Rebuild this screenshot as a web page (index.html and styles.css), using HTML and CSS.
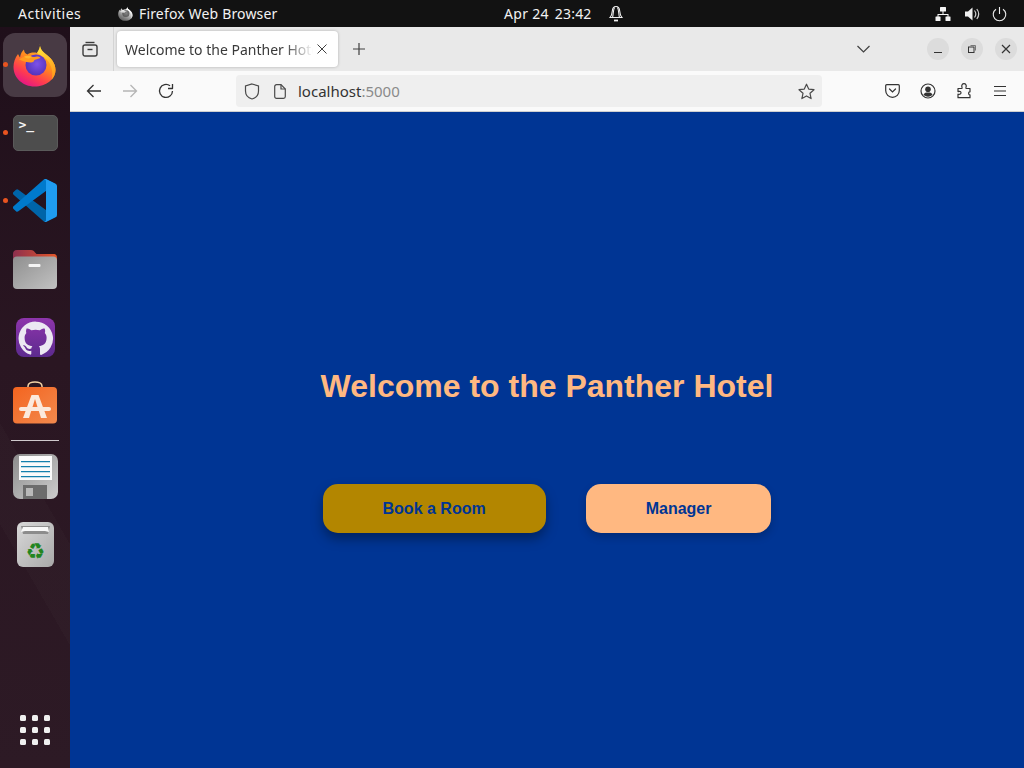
FILE: index.html
```html
<!DOCTYPE html>
<html lang="en">
<head>
<meta charset="utf-8">
<title>Welcome to the Panther Hotel</title>
<link rel="stylesheet" href="styles.css">
</head>
<body>
<svg class="defs" width="0" height="0" aria-hidden="true">
  <defs>
    <linearGradient id="fxBody" x1="0.8" y1="0.1" x2="0.3" y2="1"><stop offset="0" stop-color="#ffb92a"/><stop offset="0.4" stop-color="#ff8a1f"/><stop offset="0.72" stop-color="#ff3d4e"/><stop offset="1" stop-color="#e31587"/></linearGradient>
    <radialGradient id="fxGlobe" cx="0.55" cy="0.45" r="0.7"><stop offset="0" stop-color="#7d52e8"/><stop offset="1" stop-color="#4a2bb0"/></radialGradient>
    <linearGradient id="fxFlame" x1="0.2" y1="0" x2="0.8" y2="1"><stop offset="0" stop-color="#ffe53d"/><stop offset="1" stop-color="#ff9a1a"/></linearGradient>
    <linearGradient id="folderGrey" x1="0" y1="0" x2="1" y2="1"><stop offset="0" stop-color="#8f8f8f"/><stop offset="1" stop-color="#c2c2c2"/></linearGradient>
    <linearGradient id="folderTab" x1="0" y1="0" x2="1" y2="0"><stop offset="0" stop-color="#8d2f4e"/><stop offset="1" stop-color="#e4572a"/></linearGradient>
    <linearGradient id="gitBg" x1="0" y1="0" x2="0" y2="1"><stop offset="0" stop-color="#8e35ac"/><stop offset="1" stop-color="#5c2a8e"/></linearGradient>
    <linearGradient id="shopBg" x1="0" y1="0" x2="1" y2="1"><stop offset="0" stop-color="#f4641f"/><stop offset="1" stop-color="#f28a4e"/></linearGradient>
    <linearGradient id="saveBg" x1="0" y1="0" x2="1" y2="1"><stop offset="0" stop-color="#8c8c8c"/><stop offset="1" stop-color="#cdcdcd"/></linearGradient>
    <linearGradient id="trashBg" x1="0" y1="0" x2="1" y2="1"><stop offset="0" stop-color="#d8d8d8"/><stop offset="1" stop-color="#a9a9a9"/></linearGradient>
    <symbol id="firefox" viewBox="0 0 44 44">
      <path fill="url(#fxBody)" d="M27 .5C26.500 5 29 8 32 10.500 38 15 42.500 20 42.500 27 42.500 36 33 43.500 21.500 43.500 10 43.500.5 35 .5 24 .5 19 2 15 5 11 5.500 12 6 13 7 14.500 7.500 11 9 8 11 6.500 11 9 12.500 11 14.500 11.500 17 9.500 21 9 24 10 26 7 27.500 4 27 .5z"/>
      <path fill="url(#fxFlame)" d="M27 .5C26.500 5 29 8 32 10.500 38 15 42.500 20 42.500 27 42.500 31 41 34 38.500 37 40 32 39.500 26 37 21 34.500 16 30 13.500 24 10 26 7 27.500 4 27 .5z"/>
      <circle cx="23" cy="22" r="10.500" fill="url(#fxGlobe)"/>
      <path fill="#ff9a1f" d="M6 16.500c3-2.500 6-3.500 9.500-3 3 .4 5 .6 7.500.2 1.500-.3 3.500.2 4.500 1.300-2 .6-4 1.200-6 2-.6 1.700-1.800 2.500-3.500 2.500-4 0-7.500-1-12-3z"/>
      <path fill="#ffb52e" d="M11 13.500c3-1.200 6-1 8.500.5l-4 1.500c-2 0-3.500-.7-4.500-2z"/>
    </symbol>
  </defs>
</svg>

<header class="topbar">
  <div class="top-left">
    <span class="activities">Activities</span>
    <svg class="top-app-icon" width="15" height="15" viewBox="0 0 44 44"><g class="mono"><use href="#firefox"/></g></svg>
    <span class="top-app-name">Firefox Web Browser</span>
  </div>
  <div class="top-clock">
    <span class="clock-date">Apr 24</span><span class="clock-time">23:42</span>
    <svg class="bell" width="16" height="18" viewBox="0 0 16 18" fill="none" stroke="#f2f2f2" stroke-width="1.100"><path d="M8 1.500c-2.500 0-3.500 2-3.700 4.500-.2 3-1 5-2.300 6.500h12c-1.300-1.500-2.100-3.500-2.300-6.500C11.500 3.500 10.500 1.500 8 1.500z"/><path d="M6.500 2.500C5 5 5.500 9 4.500 12.500M9.500 2.500c1.500 2.500 1 6.500 2 10"/><path d="M6 15.500h4" stroke-width="1.800"/></svg>
  </div>
  <div class="top-right">
    <svg width="16" height="16" viewBox="0 0 16 16" fill="#f5f5f5"><rect x="5" y="1" width="6" height="4.500" rx=".5"/><rect x="0.500" y="10.500" width="5" height="4.500" rx=".5"/><rect x="10.500" y="10.500" width="5" height="4.500" rx=".5"/><path d="M7.500 5h1v3h5v3h-1V9H3.500v2h-1V8h5z"/></svg>
    <svg width="16" height="16" viewBox="0 0 16 16" fill="#f0f0f0"><path d="M1 5.500h3L8.500 1.500v13L4 10.500H1z"/><path d="M10.500 4.500c1.500 2 1.500 5 0 7M12.800 3c2.300 3 2.300 7 0 10" fill="none" stroke="#cfcfcf" stroke-width="1.200"/></svg>
    <svg width="15" height="16" viewBox="0 0 15 16" fill="none" stroke="#eeeeee" stroke-width="1.100"><path d="M7.500 1v7"/><path d="M4 3.200a6.300 6.300 0 1 0 7 0"/></svg>
  </div>
</header>

<div class="desktop">
  <nav class="dock">
    <div class="dock-slot active">
      <span class="dot"></span>
      <svg width="44" height="44"><use href="#firefox"/></svg>
    </div>
    <div class="dock-slot">
      <span class="dot"></span>
      <div class="terminal"><span class="term-prompt">&gt;_</span></div>
    </div>
    <div class="dock-slot">
      <span class="dot"></span>
      <svg class="code-icon" width="44" height="43" viewBox="0 0 100 100" preserveAspectRatio="none"><path fill="#0065a9" d="M96.460 89.200 75.860 99.130a6.230 6.230 0 0 1-7.110-1.210L1.290 36.420a4.160 4.160 0 0 1 0-6.160l5.510-5.010a4.170 4.170 0 0 1 5.320-.24L93.340 86.060c2.720 2.070 6.640.13 6.640-3.290v.24a6.250 6.250 0 0 1-3.520 5.630z"/><path fill="#007acc" d="M96.460 10.800 75.860.87a6.230 6.230 0 0 0-7.110 1.210L1.290 63.580a4.160 4.160 0 0 0 0 6.160l5.510 5.010a4.170 4.170 0 0 0 5.320.24L93.340 13.940c2.720-2.070 6.640-.13 6.640 3.290v-.24a6.250 6.250 0 0 0-3.520-5.630z"/><path fill="#1f9cf0" d="M75.860 99.130a6.240 6.240 0 0 1-7.110-1.210c2.300 2.300 6.250.67 6.250-2.590V4.670c0-3.260-3.950-4.890-6.250-2.590a6.240 6.240 0 0 1 7.110-1.210l20.600 9.910A6.250 6.250 0 0 1 100 16.410v67.180a6.250 6.250 0 0 1-3.540 5.630z"/></svg>
    </div>
    <div class="dock-slot">
      <svg width="46" height="42" viewBox="0 0 46 42"><path fill="url(#folderTab)" d="M1 6c0-2 1-4 4-4h14c2 0 3 1 4 2.500l1.500 1.500H41c3 0 4 1 4 4v8H1z"/><rect x="1" y="8.500" width="44" height="32.500" rx="4" fill="url(#folderGrey)"/><rect x="16.500" y="16" width="12" height="3" rx="1" fill="#f4f4f4"/></svg>
    </div>
    <div class="dock-slot">
      <svg width="39" height="39" viewBox="0 0 39 39"><rect width="39" height="39" rx="8" fill="url(#gitBg)"/><path fill="#ece8f2" fill-rule="evenodd" d="M19.500 3.500a17 17 0 0 0-5.400 33.100c.8.200 1.200-.4 1.200-.8v-3c-4.700 1-5.700-2-5.700-2-.8-2-1.900-2.500-1.900-2.500-1.500-1 .1-1 .1-1 1.700.1 2.600 1.700 2.600 1.700 1.500 2.600 4 1.900 4.900 1.400.2-1.100.6-1.900 1.100-2.300-3.800-.4-7.800-1.900-7.800-8.400 0-1.900.7-3.400 1.800-4.600-.2-.4-.8-2.100.2-4.500 0 0 1.400-.5 4.700 1.700a16 16 0 0 1 8.600 0c3.300-2.200 4.700-1.700 4.700-1.700 1 2.400.3 4.100.2 4.500 1.100 1.200 1.800 2.700 1.800 4.600 0 6.500-4 7.900-7.800 8.400.6.500 1.200 1.600 1.200 3.200v4.800c0 .5.300 1 1.200.8a17 17 0 0 0-5.300-33.200z"/></svg>
    </div>
    <div class="dock-slot">
      <svg class="shop-icon" width="46" height="43" viewBox="0 0 46 43"><path d="M16 8V5c0-5.500 14-5.500 14 0v3" fill="none" stroke="#f3d3a6" stroke-width="1.500"/><rect x="1" y="6" width="44" height="36.500" rx="4" fill="url(#shopBg)"/><path fill="#fbe9dc" fill-rule="evenodd" d="M19.500 14h7L35 37h-6l-2.500-8h-7L17 37h-6zM20.500 26h5L23 18z"/><rect x="7" y="26" width="32" height="4" rx="2" fill="#fbe9dc"/></svg>
    </div>
    <div class="dock-sep"></div>
    <div class="dock-slot">
      <svg width="45" height="45" viewBox="0 0 45 45"><rect width="45" height="45" rx="7" fill="url(#saveBg)"/><rect x="6" y="2" width="33" height="24" fill="#fbfbfb"/><path d="M8 7.600h29M8 12.600h29M8 17.600h29M8 22.600h29" stroke="#1480ad" stroke-width="1.100"/><path d="M10 31h24v14H10z" fill="#6c6c6c"/><rect x="13" y="34" width="7" height="8" fill="#b9b9b9"/></svg>
    </div>
    <div class="dock-slot">
      <svg width="37" height="45" viewBox="0 0 37 45"><rect width="37" height="45" rx="6" fill="url(#trashBg)"/><path d="M4 4h29l-2 8H6z" fill="#8c8c8c"/><path d="M6 5h25l1 5-4-1H8l-4 1z" fill="#f8f8f8"/><text class="recycle" x="18.500" y="36.500" text-anchor="middle">♻</text></svg>
    </div>
    <div class="apps-grid">
      <i></i><i></i><i></i><i></i><i></i><i></i><i></i><i></i><i></i>
    </div>
  </nav>

  <div class="browser">
    <div class="tabbar">
      <div class="tab-first">
        <svg width="16" height="16" viewBox="0 0 16 16" fill="none" stroke="#3c3c3c" stroke-width="1.400"><path d="M3.500 1.500h9"/><rect x="1" y="4" width="14" height="11" rx="2"/><path d="M5.500 8.500h5"/></svg>
      </div>
      <div class="tab">
        <span class="tab-title">Welcome to the Panther Hotel</span>
        <svg class="tab-close" width="10" height="10" viewBox="0 0 10 10" stroke="#404040" stroke-width="1"><path d="M.5.500l9 9M9.500.500l-9 9"/></svg>
      </div>
      <div class="new-tab">
        <svg width="12" height="12" viewBox="0 0 12 12" stroke="#404040" stroke-width="1.200"><path d="M6 0v12M0 6h12"/></svg>
      </div>
      <div class="tab-list">
        <svg width="13" height="8" viewBox="0 0 13 8" fill="none" stroke="#404040" stroke-width="1.200"><path d="M.5 1l6 6 6-6"/></svg>
      </div>
      <div class="win-btn"><svg width="10" height="10" viewBox="0 0 10 10" stroke="#333" stroke-width="1"><path d="M1 8.500h8"/></svg></div>
      <div class="win-btn"><svg width="10" height="10" viewBox="0 0 10 10" fill="none" stroke="#333" stroke-width="1"><rect x="1.500" y="3" width="5.500" height="5.500"/><path d="M3.500 1.500h5v5" stroke="#777"/></svg></div>
      <div class="win-btn"><svg width="10" height="10" viewBox="0 0 10 10" stroke="#333" stroke-width="1.200"><path d="M1 1l8 8M9 1l-8 8"/></svg></div>
    </div>

    <div class="navbar">
      <div class="nav-btn"><svg width="16" height="14" viewBox="0 0 16 14" fill="none" stroke="#333" stroke-width="1.300"><path d="M15 7H1.500M7.500 1l-6 6 6 6"/></svg></div>
      <div class="nav-btn"><svg width="16" height="14" viewBox="0 0 16 14" fill="none" stroke="#b5b5b5" stroke-width="1.300"><path d="M1 7h13.500M8.500 1l6 6-6 6"/></svg></div>
      <div class="nav-btn"><svg width="16" height="16" viewBox="0 0 16 16" fill="none" stroke="#333" stroke-width="1.300"><path d="M14.500 8A6.500 6.500 0 1 1 12 2.800"/><path d="M14.500 1v4.500H10" stroke-linejoin="round"/></svg></div>
      <div class="urlbar">
        <svg class="url-shield" width="16" height="17" viewBox="0 0 16 17" fill="none" stroke="#4a4a4a" stroke-width="1.200"><path d="M8 1l6.500 2v5c0 4-3 7-6.500 8-3.500-1-6.500-4-6.500-8V3z"/></svg>
        <svg class="url-page" width="12" height="15" viewBox="0 0 12 15" fill="none" stroke="#4a4a4a" stroke-width="1.200"><path d="M2.500.700h4.500l4.300 4.300v7.500a1.800 1.800 0 0 1-1.800 1.800h-7A1.800 1.800 0 0 1 .7 12.500v-10A1.800 1.800 0 0 1 2.500.700z"/><path d="M7 .700V5h4.300"/></svg>
        <span class="url-text">localhost<span class="url-port">:5000</span></span>
        <svg class="url-star" width="17" height="17" viewBox="0 0 17 17" fill="none" stroke="#4a4a4a" stroke-width="1.200" stroke-linejoin="round"><path d="M8.500 1.200l2.200 4.900 5.300.6-4 3.600 1.100 5.300-4.600-2.700-4.600 2.700 1.100-5.300-4-3.600 5.300-.6z"/></svg>
      </div>
      <div class="nav-btn"><svg width="15" height="14" viewBox="0 0 15 14" fill="none" stroke="#333" stroke-width="1.200"><path d="M1.700.700h11.600a1 1 0 0 1 1 1V6.500a6.800 6.800 0 0 1-13.600 0V1.700a1 1 0 0 1 1-1z"/><path d="M4.500 5l3 3 3-3" stroke-linecap="round"/></svg></div>
      <div class="nav-btn"><svg width="16" height="16" viewBox="0 0 16 16"><circle cx="8" cy="8" r="7" fill="none" stroke="#333" stroke-width="1.200"/><circle cx="8" cy="6.300" r="2.800" fill="#333"/><path d="M3.500 11.500c1-1.700 2.500-2 4.500-2s3.500.3 4.500 2c-1 1.300-2.700 2.200-4.500 2.200s-3.500-.9-4.500-2.200z" fill="#333"/></svg></div>
      <div class="nav-btn"><svg width="15" height="16" viewBox="0 0 15 16" fill="none" stroke="#333" stroke-width="1.200" stroke-linejoin="round"><path d="M1 5.500h3.500c.8 0 .8-.6.500-1.200-.8-1.800.3-3.600 2-3.600s2.800 1.800 2 3.600c-.3.600-.3 1.200.5 1.200H13v3.300c-1.800-.3-1.800 3.500 0 3v2.900H1v-3.500c2 .6 3-.5 3-1.500S3 8 1 8.600z"/></svg></div>
      <div class="nav-btn"><svg width="14" height="12" viewBox="0 0 14 12" stroke="#333" stroke-width="1.200"><path d="M1 1.500h12M1 6h12M1 10.500h12"/></svg></div>
    </div>

    <main class="page">
      <h1 class="page-title">Welcome to the Panther Hotel</h1>
      <div class="page-actions">
        <button class="btn btn-gold" type="button">Book a Room</button>
        <button class="btn btn-peach" type="button">Manager</button>
      </div>
    </main>
  </div>
</div>
</body>
</html>
```
FILE: styles.css
```css
* { box-sizing: border-box; }
html, body { margin: 0; height: 100%; overflow: hidden; }
body {
  display: flex;
  flex-direction: column;
  width: 1024px;
  height: 768px;
  font-family: "Noto Sans", "Open Sans", sans-serif;
}
.defs { position: absolute; }
svg { display: block; flex: none; }

.topbar {
  height: 27px;
  flex: none;
  display: flex;
  align-items: center;
  background: #121212;
  color: #f2f2f2;
  font-size: 14px;
}
.top-left { display: flex; align-items: center; width: 504px; padding-left: 18px; }
.activities { width: 100px; letter-spacing: .5px; }
.top-app-icon { margin-right: 6px; }
.top-app-name { letter-spacing: .16px; }
.mono { filter: grayscale(1) brightness(1.3); }
.top-clock { display: flex; align-items: center; width: 431px; }
.clock-date { letter-spacing: .3px; }
.clock-time { margin-left: 6px; letter-spacing: .2px; }
.bell { margin-left: 16px; }
.top-right { display: flex; align-items: center; gap: 12.500px; }

.desktop { flex: 1; display: flex; min-height: 0; }

.dock {
  width: 70px;
  flex: none;
  display: flex;
  flex-direction: column;
  align-items: center;
  padding-top: 6px;
  background:
    linear-gradient(60deg, transparent 28.300%, rgba(255,255,255,.014) 28.300% 40%, transparent 40%),
    linear-gradient(180deg, #1f0f1a 0%, #2a1622 45%, #2d1a25 100%);
}
.dock-slot {
  position: relative;
  width: 64px;
  height: 64px;
  margin-bottom: 4px;
  border-radius: 12px;
  display: flex;
  align-items: center;
  justify-content: center;
}
.dock-slot.active { background: #483a44; }
.dot {
  position: absolute;
  left: 0;
  top: 29px;
  width: 5px;
  height: 5px;
  border-radius: 50%;
  background: #e95420;
}
.code-icon { margin-top: -1px; }
.shop-icon { margin-bottom: 6px; }
.recycle {
  font-family: "DejaVu Sans", sans-serif;
  font-size: 22px;
  font-weight: 700;
  fill: #23851f;
}
.terminal {
  width: 45px;
  height: 36px;
  border-radius: 5px;
  background: #4d4d4d;
  border: 1px solid #5a5a5a;
  padding: 2px 0 0 5px;
}
.term-prompt {
  display: block;
  color: #f4f4f4;
  font: 700 13px/13px "DejaVu Sans Mono", monospace;
}
.dock-sep {
  width: 48px;
  height: 1px;
  flex: none;
  margin: -1px 0 3px;
  background: #cfc9cc;
}
.apps-grid {
  margin-top: auto;
  margin-bottom: 23px;
  display: grid;
  grid-template-columns: repeat(3, 6px);
  gap: 6px;
}
.apps-grid i {
  width: 6px;
  height: 6px;
  border-radius: 1.500px;
  background: #f0f0f0;
}

.browser { flex: 1; min-width: 0; display: flex; flex-direction: column; }

.tabbar {
  height: 44px;
  flex: none;
  display: flex;
  align-items: center;
  background: #e9e9e9;
  color: #333;
}
.tab-first {
  width: 44px;
  height: 44px;
  display: flex;
  align-items: center;
  justify-content: center;
  border-right: 1px solid #d4d4d4;
  padding-right: 4px;
}
.tab {
  width: 221px;
  height: 36px;
  margin-left: 3px;
  display: flex;
  align-items: center;
  padding-left: 8px;
  background: #fff;
  border-radius: 4px;
  box-shadow: 0 0 3px rgba(0,0,0,.25);
}
.tab-title {
  width: 188px;
  overflow: hidden;
  white-space: nowrap;
  font-size: 14px;
  color: #3a3a3a;
  -webkit-mask-image: linear-gradient(90deg, #000 85%, transparent 100%);
  mask-image: linear-gradient(90deg, #000 85%, transparent 100%);
}
.tab-close { margin-left: 4px; }
.new-tab { width: 42px; display: flex; justify-content: center; }
.tab-list { margin-left: auto; margin-right: 57px; }
.win-btn {
  width: 22px;
  height: 22px;
  margin-right: 12px;
  border-radius: 50%;
  background: #dcdcdc;
  display: flex;
  align-items: center;
  justify-content: center;
}
.win-btn:last-child { margin-right: 7px; }

.navbar {
  height: 41px;
  flex: none;
  display: flex;
  align-items: center;
  padding: 0 6px;
  background: #fafafa;
  border-bottom: 1px solid #cfcfcf;
}
.nav-btn {
  width: 36px;
  height: 32px;
  flex: none;
  display: flex;
  align-items: center;
  justify-content: center;
}
.urlbar {
  flex: 1;
  height: 32px;
  margin: 0 52px;
  display: flex;
  align-items: center;
  padding: 0 7px 0 8px;
  background: #efefef;
  border-radius: 4px;
  font-size: 15px;
  color: #333;
}
.url-page { margin-left: 14px; }
.url-text { margin-left: 12px; }
.url-port { color: #8a8a8a; }
.url-star { margin-left: auto; }

.page {
  flex: 1;
  display: flex;
  flex-direction: column;
  align-items: center;
  justify-content: center;
  padding-top: 21px;
  background: #003594;
  font-family: "Liberation Sans", Arial, sans-serif;
}
.page-title {
  margin: 0 0 79px;
  font-size: 32px;
  font-weight: 700;
  color: #ffb881;
}
.page-actions { display: flex; gap: 40px; }
.btn {
  border: 0;
  padding: 15.500px 60px;
  border-radius: 15px;
  font: 700 16px "Liberation Sans", Arial, sans-serif;
  color: #003594;
}
.btn-gold { background: #b38600; box-shadow: 0 6px 12px rgba(0,0,0,.35); }
.btn-peach { background: #ffb881; box-shadow: 0 4px 8px rgba(0,0,0,.2); }
```
